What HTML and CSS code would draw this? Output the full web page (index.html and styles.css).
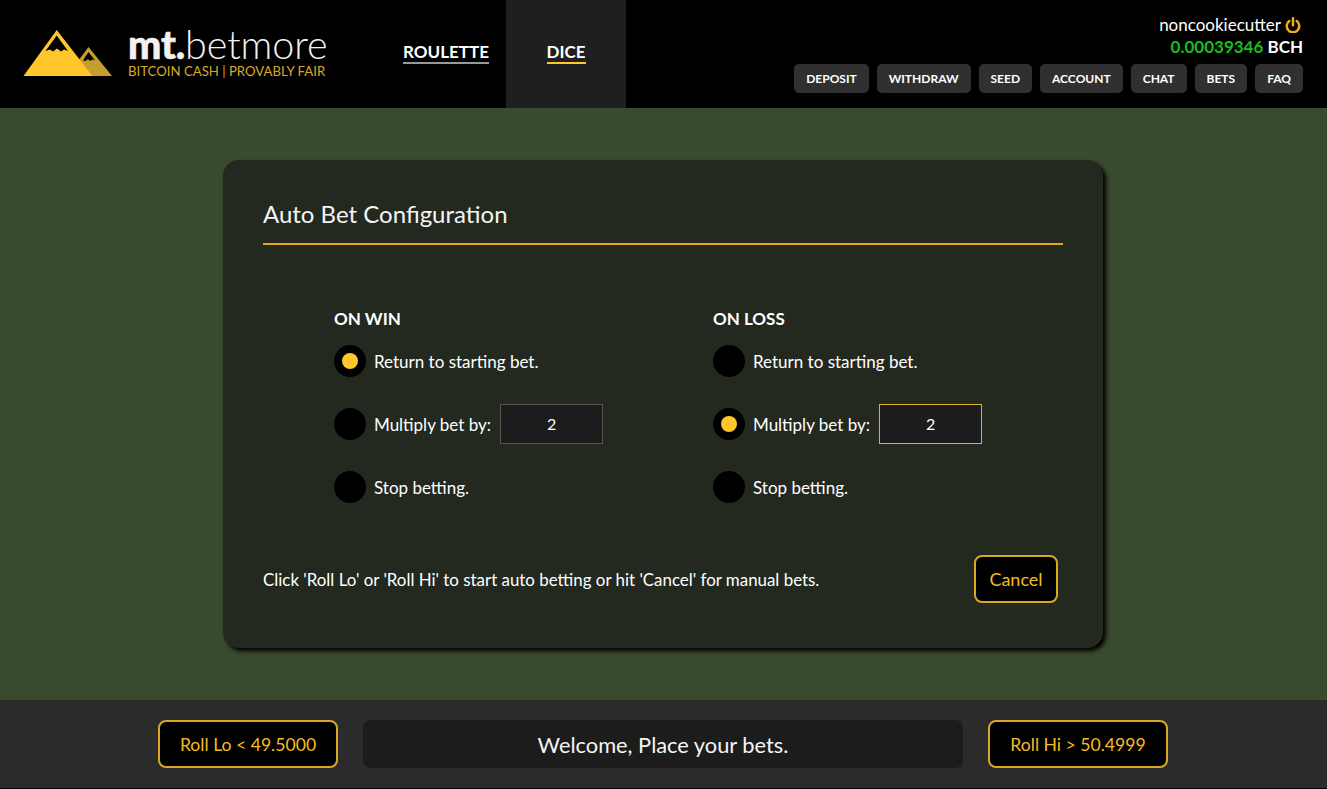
FILE: index.html
```html
<!DOCTYPE html>
<html lang="en">
<head>
<meta charset="utf-8">
<title>mt.betmore</title>
<link rel="stylesheet" href="styles.css">
</head>
<body>
<div class="app">
  <header class="topbar">
    <div class="brand">
      <svg class="brand-mark" width="90" height="46" viewBox="0 0 90 46">
        <polygon class="peak-back" points="65.500,17 89,46 60,46 52,35"/>
        <polygon class="snow-back" points="65.500,22 72,30.500 69.500,29.500 67,31 65,29 62.500,31 60,30.500"/>
        <polygon class="peak-front" points="33.700,0 69.500,46 0.500,46"/>
        <polygon class="snow-front" points="33.700,5.500 45,21 41,19.500 38,21.500 34,18.500 30,21.500 27,19.500 22.500,21"/>
      </svg>
      <div class="brand-text">
        <div class="brand-name"><b>mt.</b>betmore</div>
        <div class="brand-tag">BITCOIN CASH | PROVABLY FAIR</div>
      </div>
    </div>
    <nav class="tabs">
      <a class="tab"><span class="tab-label">ROULETTE</span></a>
      <a class="tab tab-active"><span class="tab-label">DICE</span></a>
    </nav>
    <div class="account">
      <div class="user">noncookiecutter
        <svg class="power" width="16" height="16" viewBox="0 0 16 16"><path d="M4.300 4A6.250 6.250 0 1 0 11.700 4M8 1.300v7"/></svg>
      </div>
      <div class="balance"><span class="amount">0.00039346</span> BCH</div>
      <div class="menu">
        <button class="menu-btn">DEPOSIT</button>
        <button class="menu-btn">WITHDRAW</button>
        <button class="menu-btn">SEED</button>
        <button class="menu-btn">ACCOUNT</button>
        <button class="menu-btn">CHAT</button>
        <button class="menu-btn">BETS</button>
        <button class="menu-btn">FAQ</button>
      </div>
    </div>
  </header>
  <main class="stage">
    <section class="card">
      <h2 class="card-title">Auto Bet Configuration</h2>
      <div class="columns">
        <div class="column">
          <h3 class="column-title">ON WIN</h3>
          <div class="option"><span class="radio radio-on"></span><span class="option-label">Return to starting bet.</span></div>
          <div class="option"><span class="radio"></span><span class="option-label">Multiply bet by:</span><input class="mult" value="2"></div>
          <div class="option"><span class="radio"></span><span class="option-label">Stop betting.</span></div>
        </div>
        <div class="column">
          <h3 class="column-title">ON LOSS</h3>
          <div class="option"><span class="radio"></span><span class="option-label">Return to starting bet.</span></div>
          <div class="option"><span class="radio radio-on"></span><span class="option-label">Multiply bet by:</span><input class="mult mult-on" value="2"></div>
          <div class="option"><span class="radio"></span><span class="option-label">Stop betting.</span></div>
        </div>
      </div>
      <div class="card-foot">
        <p class="hint">Click 'Roll Lo' or 'Roll Hi' to start auto betting or hit 'Cancel' for manual bets.</p>
        <button class="gold-btn cancel">Cancel</button>
      </div>
    </section>
  </main>
  <footer class="rollbar">
    <button class="gold-btn roll">Roll Lo &lt; 49.5000</button>
    <div class="message">Welcome, Place your bets.</div>
    <button class="gold-btn roll">Roll Hi &gt; 50.4999</button>
  </footer>
</div>
</body>
</html>
```
FILE: styles.css
```css
* { box-sizing: border-box; }
html, body { margin: 0; height: 100%; }
body { font-family: Lato, "Liberation Sans", sans-serif; color: #fff; background: #000; overflow: hidden; }
.app { height: 789px; display: flex; flex-direction: column; }

.topbar { height: 108px; background: #000; display: flex; flex: none; }
.brand { width: 386px; padding: 30px 0 0 23px; display: flex; align-items: flex-start; flex: none; }
.brand-mark { flex: none; margin-right: 15px; }
.peak-front { fill: #ffc72c; }
.peak-back { fill: #c49f2c; }
.snow-front, .snow-back { fill: #000; }
.brand-text { width: 200px; margin-top: -3px; }
.brand-name { font-size: 39.500px; line-height: 34px; font-weight: 300; letter-spacing: -0.1px; color: #f2f2f2; white-space: nowrap; height: 34px; }
.brand-name b { font-weight: 900; -webkit-text-stroke: 0.6px #f2f2f2; }
.brand-tag { font-size: 13.200px; line-height: 14px; color: #d8a924; white-space: nowrap; margin-top: 3px; }

.tabs { display: flex; flex: none; }
.tab { width: 120px; display: flex; align-items: center; justify-content: center; font-size: 17px; font-weight: 700; padding-bottom: 2px; }
.tab-active { background: #1f1f1f; }
.tab-label { border-bottom: 2px solid #999; line-height: 20px; }
.tab-active .tab-label { border-bottom-color: #ffc72c; }

.account { margin-left: auto; padding: 14px 24px 0 0; display: flex; flex-direction: column; align-items: flex-end; }
.user { font-size: 17px; line-height: 22px; display: flex; align-items: center; gap: 4px; padding-right: 2px; }
.power { fill: none; stroke: #f0ac1c; stroke-width: 2.500; stroke-linecap: round; }
.balance { font-size: 17px; line-height: 22px; font-weight: 700; }
.amount { color: #19bb20; }
.menu { display: flex; gap: 8px; margin-top: 6px; }
.menu-btn { height: 29px; padding: 0 12px; border: 0; border-radius: 5px; background: #303030; color: #fff; font: 700 12px Lato, sans-serif; }

.stage { flex: 1; background: #3a4a2e; display: flex; justify-content: center; padding: 52px 1px 0 0; }
.card { width: 880px; height: 488px; padding: 40px; background: #23291f; border-radius: 16px; box-shadow: 3px 3px 4px #000; }
.card-title { margin: 0; height: 45px; line-height: 27px; font-size: 24px; font-weight: 400; border-bottom: 2px solid #e3a820; color: #f4f4f4; }
.columns { display: flex; padding: 64px 0 0 71px; }
.column { width: 379px; flex: none; }
.column-title { margin: 0; font-size: 17px; line-height: 20px; font-weight: 700; }
.option { height: 63px; display: flex; align-items: center; font-size: 17px; }
.option-label { padding-top: 2px; }
.radio { width: 32px; height: 32px; border-radius: 50%; background: #000; margin-right: 8px; flex: none; display: flex; align-items: center; justify-content: center; }
.radio-on::after { content: ""; width: 16px; height: 16px; border-radius: 50%; background: #ffc72c; }
.mult { width: 103px; height: 40px; margin-left: 9px; background: #1c1c1c; border: 1px solid #555; color: #fff; text-align: center; font: 16px Lato, sans-serif; padding: 0; }
.mult-on { border-color: #e0ae2c; }
.card-foot { display: flex; align-items: center; justify-content: space-between; padding-right: 5px; margin-top: 37px; }
.hint { margin: 0; font-size: 16.900px; }
.gold-btn { background: #000; border: 2px solid #d9a823; border-radius: 8px; color: #f6bc20; font: 18px Lato, sans-serif; height: 48px; padding: 0; }
.cancel { width: 84px; }

.rollbar { height: 89px; flex: none; background: #2b2b2b; border-bottom: 1px solid #000; display: flex; justify-content: center; align-items: flex-start; padding: 20px 1px 0 0; gap: 25px; }
.roll { width: 180px; font-size: 17.600px; }
.message { width: 600px; height: 48px; border-radius: 8px; background: #1c1c1c; font-size: 21.800px; display: flex; align-items: center; justify-content: center; color: #f4f4f4; }
```
